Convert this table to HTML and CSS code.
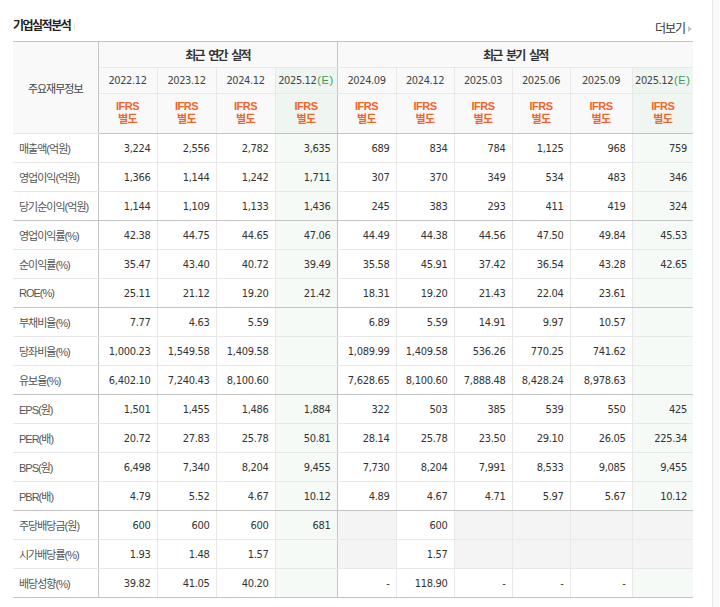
FILE: index.html
```html
<!DOCTYPE html>
<html lang="ko">
<head>
<meta charset="utf-8">
<title>기업실적분석</title>
<link rel="stylesheet" href="styles.css">
</head>
<body>
<div class="page">
  <div class="main">
    <div class="head">
      <h3 class="title">기업실적분석</h3>
      <a class="more" href="#">더보기<span class="arr"></span></a>
    </div>
    <table class="fin">
      <colgroup>
        <col class="c-lab"><col class="c59"><col class="c59"><col class="c59"><col class="c62">
        <col class="c59"><col class="c58"><col class="c58"><col class="c58"><col class="c62"><col class="c61">
      </colgroup>
      <thead>
        <tr class="h1">
          <th rowspan="3" class="lab-h">주요재무정보</th>
          <th colspan="4" class="sec ea">최근 연간 실적</th>
          <th colspan="6" class="sec">최근 분기 실적</th>
        </tr>
        <tr class="h2">
          <th>2022.12</th><th>2023.12</th><th>2024.12</th><th class="est ea">2025.12<em>(E)</em></th>
          <th>2024.09</th><th>2024.12</th><th>2025.03</th><th>2025.06</th><th>2025.09</th><th class="est">2025.12<em>(E)</em></th>
        </tr>
        <tr class="h3">
          <th><span class="ifrs">IFRS<br>별도</span></th>
          <th><span class="ifrs">IFRS<br>별도</span></th>
          <th><span class="ifrs">IFRS<br>별도</span></th>
          <th class="est ea"><span class="ifrs">IFRS<br>별도</span></th>
          <th><span class="ifrs">IFRS<br>별도</span></th>
          <th><span class="ifrs">IFRS<br>별도</span></th>
          <th><span class="ifrs">IFRS<br>별도</span></th>
          <th><span class="ifrs">IFRS<br>별도</span></th>
          <th><span class="ifrs">IFRS<br>별도</span></th>
          <th class="est"><span class="ifrs">IFRS<br>별도</span></th>
        </tr>
      </thead>
      <tbody>
        <tr>
          <td class="lab">매출액(억원)</td>
          <td>3,224</td><td>2,556</td><td>2,782</td><td class="est ea">3,635</td>
          <td>689</td><td>834</td><td>784</td><td>1,125</td><td>968</td><td class="est">759</td>
        </tr>
        <tr>
          <td class="lab">영업이익(억원)</td>
          <td>1,366</td><td>1,144</td><td>1,242</td><td class="est ea">1,711</td>
          <td>307</td><td>370</td><td>349</td><td>534</td><td>483</td><td class="est">346</td>
        </tr>
        <tr class="sep">
          <td class="lab">당기순이익(억원)</td>
          <td>1,144</td><td>1,109</td><td>1,133</td><td class="est ea">1,436</td>
          <td>245</td><td>383</td><td>293</td><td>411</td><td>419</td><td class="est">324</td>
        </tr>
        <tr>
          <td class="lab">영업이익률(%)</td>
          <td>42.38</td><td>44.75</td><td>44.65</td><td class="est ea">47.06</td>
          <td>44.49</td><td>44.38</td><td>44.56</td><td>47.50</td><td>49.84</td><td class="est">45.53</td>
        </tr>
        <tr>
          <td class="lab">순이익률(%)</td>
          <td>35.47</td><td>43.40</td><td>40.72</td><td class="est ea">39.49</td>
          <td>35.58</td><td>45.91</td><td>37.42</td><td>36.54</td><td>43.28</td><td class="est">42.65</td>
        </tr>
        <tr class="sep">
          <td class="lab">ROE(%)</td>
          <td>25.11</td><td>21.12</td><td>19.20</td><td class="est ea">21.42</td>
          <td>18.31</td><td>19.20</td><td>21.43</td><td>22.04</td><td>23.61</td><td class="est"></td>
        </tr>
        <tr>
          <td class="lab">부채비율(%)</td>
          <td>7.77</td><td>4.63</td><td>5.59</td><td class="est ea"></td>
          <td>6.89</td><td>5.59</td><td>14.91</td><td>9.97</td><td>10.57</td><td class="est"></td>
        </tr>
        <tr>
          <td class="lab">당좌비율(%)</td>
          <td>1,000.23</td><td>1,549.58</td><td>1,409.58</td><td class="est ea"></td>
          <td>1,089.99</td><td>1,409.58</td><td>536.26</td><td>770.25</td><td>741.62</td><td class="est"></td>
        </tr>
        <tr class="sep">
          <td class="lab">유보율(%)</td>
          <td>6,402.10</td><td>7,240.43</td><td>8,100.60</td><td class="est ea"></td>
          <td>7,628.65</td><td>8,100.60</td><td>7,888.48</td><td>8,428.24</td><td>8,978.63</td><td class="est"></td>
        </tr>
        <tr>
          <td class="lab">EPS(원)</td>
          <td>1,501</td><td>1,455</td><td>1,486</td><td class="est ea">1,884</td>
          <td>322</td><td>503</td><td>385</td><td>539</td><td>550</td><td class="est">425</td>
        </tr>
        <tr>
          <td class="lab">PER(배)</td>
          <td>20.72</td><td>27.83</td><td>25.78</td><td class="est ea">50.81</td>
          <td>28.14</td><td>25.78</td><td>23.50</td><td>29.10</td><td>26.05</td><td class="est">225.34</td>
        </tr>
        <tr>
          <td class="lab">BPS(원)</td>
          <td>6,498</td><td>7,340</td><td>8,204</td><td class="est ea">9,455</td>
          <td>7,730</td><td>8,204</td><td>7,991</td><td>8,533</td><td>9,085</td><td class="est">9,455</td>
        </tr>
        <tr class="sep">
          <td class="lab">PBR(배)</td>
          <td>4.79</td><td>5.52</td><td>4.67</td><td class="est ea">10.12</td>
          <td>4.89</td><td>4.67</td><td>4.71</td><td>5.97</td><td>5.67</td><td class="est">10.12</td>
        </tr>
        <tr>
          <td class="lab">주당배당금(원)</td>
          <td>600</td><td>600</td><td>600</td><td class="est ea">681</td>
          <td class="na"></td><td>600</td><td class="na"></td><td class="na"></td><td class="na"></td><td class="na"></td>
        </tr>
        <tr>
          <td class="lab">시가배당률(%)</td>
          <td>1.93</td><td>1.48</td><td>1.57</td><td class="est ea"></td>
          <td class="na"></td><td>1.57</td><td class="na"></td><td class="na"></td><td class="na"></td><td class="na"></td>
        </tr>
        <tr class="sep">
          <td class="lab">배당성향(%)</td>
          <td>39.82</td><td>41.05</td><td>40.20</td><td class="est ea"></td>
          <td>-</td><td>118.90</td><td>-</td><td>-</td><td>-</td><td class="est"></td>
        </tr>
      </tbody>
    </table>
  </div>
  <div class="side"></div>
</div>
</body>
</html>
```

FILE: styles.css
```css
* { box-sizing: border-box; }

body {
  margin: 0;
  background: #fff;
  color: #333;
  font-family: "Liberation Sans", "Noto Sans CJK KR", sans-serif;
}

.page {
  display: flex;
  min-height: 607px;
}

.main {
  flex: none;
  width: 712px;
  padding-left: 13px;
}

.side {
  flex: 1;
  background: #f9f9f9;
  border-left: 1px solid #e8e8e8;
}

/* heading */
.head {
  width: 680px;
  height: 41px;
  display: flex;
  justify-content: space-between;
  align-items: flex-end;
}

.title {
  align-self: flex-start;
  margin: 19px 0 0;
  display: flex;
  align-items: center;
  font-size: 12px;
  line-height: 14px;
  font-weight: bold;
  letter-spacing: -1.5px;
  color: #222;
}

.title::after {
  content: "";
  width: 1px;
  height: 7px;
  margin-left: 4px;
  background: #e2e2e2;
}

.more {
  margin-bottom: 5px;
  padding-right: 1px;
  display: flex;
  align-items: center;
  font-size: 12px;
  line-height: 14px;
  letter-spacing: -1px;
  color: #333;
  text-decoration: none;
}

.arr {
  width: 0;
  height: 0;
  margin-left: 3px;
  border-left: 4px solid #c4c4c4;
  border-top: 3px solid transparent;
  border-bottom: 3px solid transparent;
}

/* table */
.fin {
  width: 680px;
  border-collapse: collapse;
  table-layout: fixed;
}

.c-lab { width: 85px; }
.c59 { width: 59px; }
.c58 { width: 58px; }
.c62 { width: 62px; }
.c61 { width: 61px; }

.fin th,
.fin td {
  padding: 0;
  border: 1px solid #e8e8e8;
}

.fin tr > :first-child { border-left: 0; }
.fin tr > :last-child { border-right: 0; }

.fin thead th {
  background: #f9f9f9;
  font-weight: normal;
  text-align: center;
}

.fin .h1 th {
  border-top-color: #c4c4c4;
}

.fin .h1 { height: 26px; }
.fin .h2 { height: 26px; }
.fin .h3 { height: 40px; }
.fin tbody tr { height: 29px; }

.fin .h3 th { border-bottom-color: #c4c4c4; }

.lab-h {
  font-size: 11px;
  letter-spacing: -1px;
  color: #444;
  border-right-color: #c4c4c4 !important;
}

.sec {
  font-size: 12px;
  font-weight: bold !important;
  letter-spacing: -1.8px;
  word-spacing: 3px;
  color: #333;
}

.fin .h2 th {
  font-family: "DejaVu Sans Condensed", "DejaVu Sans", "Liberation Sans", sans-serif;
  font-stretch: condensed;
  font-size: 11px;
  letter-spacing: -0.4px;
  color: #444;
}

.fin .h2 em {
  font-style: normal;
  color: #3d9b58;
  font-family: "Liberation Sans", sans-serif;
  letter-spacing: 0.6px;
  margin-left: 1px;
}

.ifrs {
  display: inline-block;
  font-size: 11px;
  line-height: 13px;
  font-weight: bold;
  letter-spacing: -0.5px;
  color: #f2642a;
}

.fin thead th.est { background: #eff5f0; }

.fin td {
  text-align: right;
  padding-right: 6px;
  font-family: "DejaVu Sans Condensed", "DejaVu Sans", "Liberation Sans", sans-serif;
  font-stretch: condensed;
  font-size: 11px;
  letter-spacing: -0.3px;
  color: #333;
  white-space: nowrap;
}

.fin td.lab {
  text-align: left;
  padding: 0 0 0 6px;
  font-family: "Liberation Sans", "Noto Sans CJK KR", sans-serif;
  font-stretch: normal;
  font-size: 11px;
  letter-spacing: -1px;
  color: #555;
  border-right-color: #c4c4c4;
}

.fin td.est { background: #f5faf6; }
.fin td.na { background: #f4f4f4; }

.fin .ea { border-right-color: #c4c4c4; }

.fin tr.sep td { border-bottom-color: #c4c4c4; }
```
